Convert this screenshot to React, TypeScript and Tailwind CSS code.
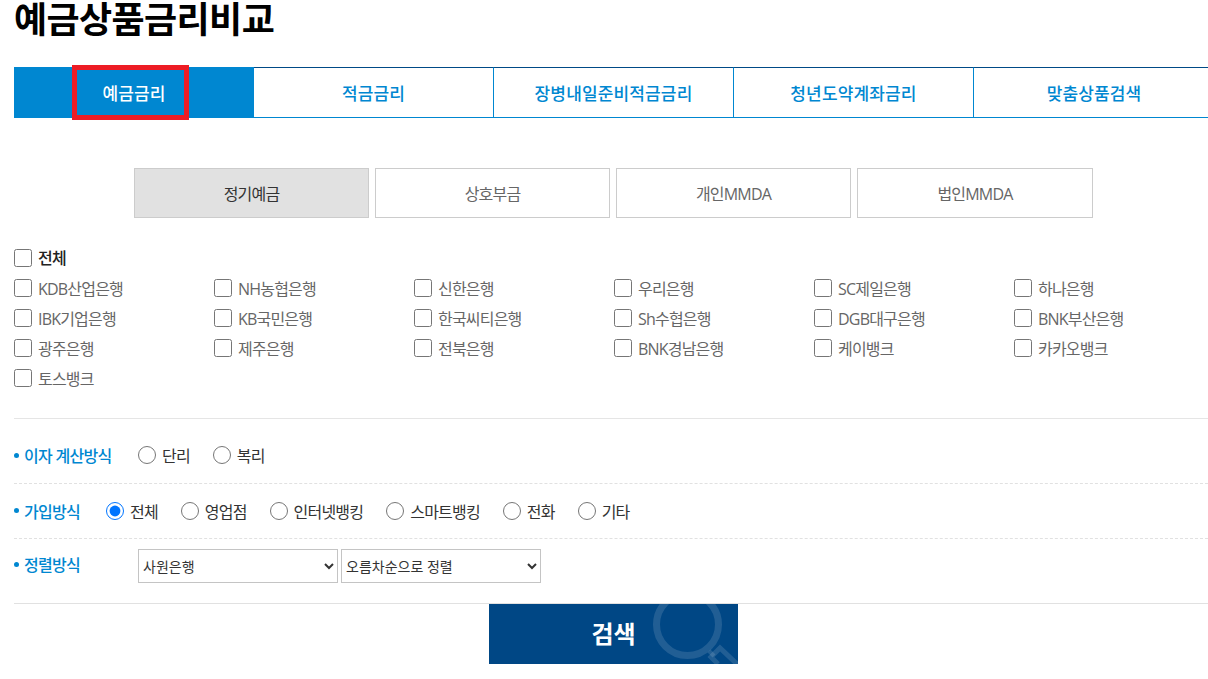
const font = "font-['Open_Sans','Noto_Sans_CJK_KR',sans-serif]";

const mainTabs = ["예금금리", "적금금리", "장병내일준비적금금리", "청년도약계좌금리", "맞춤상품검색"];
const subTabs = ["정기예금", "상호부금", "개인MMDA", "법인MMDA"];
const banks = [
  "KDB산업은행", "NH농협은행", "신한은행", "우리은행", "SC제일은행", "하나은행",
  "IBK기업은행", "KB국민은행", "한국씨티은행", "Sh수협은행", "DGB대구은행", "BNK부산은행",
  "광주은행", "제주은행", "전북은행", "BNK경남은행", "케이뱅크", "카카오뱅크",
  "토스뱅크",
];
const joinTypes = ["전체", "영업점", "인터넷뱅킹", "스마트뱅킹", "전화", "기타"];

const Label = ({ text, className }: { text: string; className: string }) => (
  <div className={`flex items-center text-[16px] font-medium tracking-[-0.7px] text-[#0087d1] ${className}`}>
    <span className="mr-[5px] h-[5px] w-[5px] rounded-full bg-[#0087d1]" />
    <span className="mt-[2px]">{text}</span>
  </div>
);

const Radio = ({ name, text, checked, className }: { name: string; text: string; checked?: boolean; className: string }) => (
  <label className={`flex items-center text-[16px] tracking-[-0.8px] text-[#333] ${className}`}>
    <input type="radio" name={name} defaultChecked={checked} className="m-0 mr-[6px] h-[18px] w-[18px]" />
    <span className="mt-[2px]">{text}</span>
  </label>
);

export default function App() {
  return (
    <div className={`${font} h-[679px] w-[1208px] overflow-hidden bg-white pl-[14px]`}>
      <h1 className="h-[67px] pt-[1px] text-[36px] font-bold leading-[38px] tracking-[-0.6px] text-black">예금상품금리비교</h1>

      <div className="relative flex h-[51px] w-[1200px]">
        {mainTabs.map((tab, i) => (
          <div
            key={tab}
            className={`flex w-[240px] items-center justify-center pt-[2px] text-[17px] font-medium tracking-[0.15px] ${
              i === 0
                ? "bg-[#0087d1] text-white"
                : "border-t border-b border-t-[#004a86] border-b-[#0087d1] text-[#0087d1]"
            } ${i > 0 && i < 4 ? "border-r border-r-[#0087d1]" : ""}`}
          >
            {tab}
          </div>
        ))}
        <div className="absolute left-[58px] top-[-2px] h-[55px] w-[117px] border-[5px] border-[#ed1c24]" />
      </div>

      <div className="mt-[50px] flex gap-[6px] pl-[120px]">
        {subTabs.map((tab, i) => (
          <div
            key={tab}
            className={`flex h-[50px] items-center justify-center border border-[#ccc] pt-[2px] text-[16px] tracking-[-0.8px] ${
              i === 3 ? "w-[236px]" : "w-[235px]"
            } ${i === 0 ? "bg-[#e1e1e1] text-[#333]" : "text-[#666]"}`}
          >
            {tab}
          </div>
        ))}
      </div>

      <label className="mt-[25px] flex h-[30px] items-center text-[16px] font-medium tracking-[-0.8px] text-[#222]">
        <input type="checkbox" className="m-0 mr-[6px] h-[18px] w-[18px]" />
        전체
      </label>
      <div className="grid grid-cols-[200px_200px_200px_200px_200px_1fr]">
        {banks.map((bank) => (
          <label key={bank} className="flex h-[30px] items-center text-[16px] tracking-[-0.8px] text-[#666]">
            <input type="checkbox" className="m-0 mr-[6px] h-[18px] w-[18px]" />
            <span className="mt-[2px]">{bank}</span>
          </label>
        ))}
      </div>

      <div className="mt-[25px] border-t border-[#e5e5e5]">
        <div className="flex h-[65px] items-center border-b border-dashed border-[#e1e1e1] pt-[8px]">
          <Label text="이자 계산방식" className="w-[124px]" />
          <Radio name="calc" text="단리" className="mr-[23px]" />
          <Radio name="calc" text="복리" className="" />
        </div>
        <div className="flex h-[55px] items-center border-b border-dashed border-[#e1e1e1] pb-[1px]">
          <Label text="가입방식" className="w-[92px]" />
          {joinTypes.map((type, i) => (
            <Radio key={type} name="join" text={type} checked={i === 0} className="mr-[23px]" />
          ))}
        </div>
        <div className="flex h-[65px] border-b border-[#e1e1e1] pt-[10px]">
          <Label text="정렬방식" className="h-[30px] w-[124px]" />
          <select className="h-[34px] w-[200px] border border-[#c4c4c4] bg-white text-[14px] text-[#333]">
            <option>사원은행</option>
          </select>
          <select className="ml-[3px] h-[34px] w-[200px] border border-[#c4c4c4] bg-white text-[14px] text-[#333]">
            <option>오름차순으로 정렬</option>
          </select>
        </div>
      </div>

      <div className="relative ml-[475px] flex h-[60px] w-[249px] items-center justify-center overflow-hidden bg-[#004785] text-[24px] font-bold text-white">
        검색
        <svg className="absolute left-[160px] top-0" width="89" height="60" viewBox="0 0 89 60" fill="none" stroke="#fff" strokeOpacity="0.13">
          <circle cx="38.5" cy="20.5" r="31" strokeWidth="7" />
          <path d="M60 47 L65 52" strokeWidth="4" />
          <path d="M69 60 L62 53 L71 44 L90 62" strokeWidth="5" />
        </svg>
      </div>
    </div>
  );
}
